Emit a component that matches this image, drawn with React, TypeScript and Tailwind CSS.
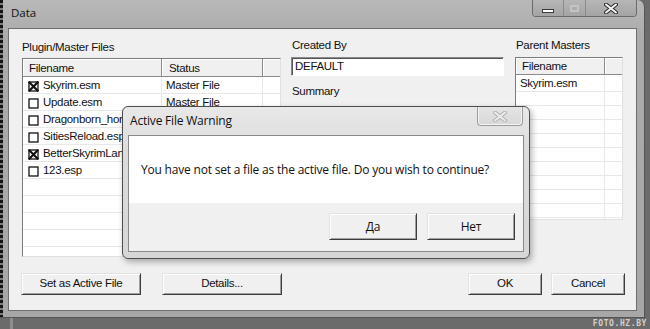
import React from "react";

type Row = { name: string; status: string; checked: boolean };

const rows: Row[] = [
  { name: "Skyrim.esm", status: "Master File", checked: true },
  { name: "Update.esm", status: "Master File", checked: false },
  { name: "Dragonborn_hor", status: "", checked: false },
  { name: "SitiesReload.esp", status: "", checked: false },
  { name: "BetterSkyrimLan", status: "", checked: true },
  { name: "123.esp", status: "", checked: false },
  { name: "", status: "", checked: false },
  { name: "", status: "", checked: false },
  { name: "", status: "", checked: false },
  { name: "", status: "", checked: false },
  { name: "", status: "", checked: false },
];

function Check({ checked }: { checked: boolean }) {
  return (
    <svg width="11" height="11" viewBox="0 0 11 11" className="shrink-0">
      <rect x="1" y="1" width="9" height="9" fill="white" stroke="#111" strokeWidth="1.3" />
      {checked && (
        <g stroke="#111" strokeWidth="2.2" strokeLinecap="square">
          <line x1="1.5" y1="1.5" x2="9.5" y2="9.5" />
          <line x1="9.5" y1="1.5" x2="1.5" y2="9.5" />
        </g>
      )}
    </svg>
  );
}

function ClassicButton({ children, className }: { children: React.ReactNode; className: string }) {
  return (
    <div
      className={`flex items-center justify-center bg-[#f0f0f0] border border-t-[#e2e2e2] border-l-[#e2e2e2] border-b-[#3c3c3c] border-r-[#3c3c3c] shadow-[inset_1px_1px_0_#ffffff,inset_-1px_-1px_0_#a0a0a0] ${className}`}
    >
      {children}
    </div>
  );
}

export default function App() {
  return (
    <div className="relative w-[650px] h-[329px] overflow-hidden bg-[#6b6b6b] font-['Liberation_Sans',Arial,sans-serif] text-[11.5px] tracking-[-0.3px] text-[#111]">
      {/* desktop bits under the window */}
      <div className="absolute left-[10px] top-[318px] w-[3px] h-[11px] bg-[#8e8e8e]" />
      <div className="absolute right-[3px] bottom-[1px] font-['DejaVu_Sans_Mono',monospace] font-bold text-[8px] leading-[8px] tracking-[0.6px] text-[#d0d0d0]">
        FOTO.HZ.BY
      </div>

      {/* main window */}
      <div className="absolute left-0 top-0 w-[645px] h-[318px] flex flex-col rounded-tr-[7px] border-r border-b border-[#555555] bg-[linear-gradient(180deg,#b8b8b8_0%,#ababab_12%,#a7a7a7_100%)] pl-[8px] pr-[7px] pb-[6px]">
        <div className="absolute left-0 top-0 w-[3px] h-full bg-[repeating-linear-gradient(180deg,#141414_0px,#141414_3px,#7c7c7c_3px,#7c7c7c_5px)]" />

        {/* title bar */}
        <div className="h-[28px] flex items-start">
          <div className="pt-[5px] pl-[3px] font-['Open_Sans',sans-serif] text-[11.5px] tracking-normal leading-[16px] text-[#111]">
            Data
          </div>
          <div className="ml-auto flex h-[17px] rounded-b-[4px] border border-t-0 border-[#6a6a6a] shadow-[inset_1px_0_0_#cfcfcf,inset_-1px_-1px_0_#cfcfcf] overflow-hidden">
            <div className="w-[31px] h-full flex items-center justify-center border-r border-[#8a8a8a] bg-[linear-gradient(180deg,#b6b6b6,#a4a4a4)]">
              <div className="mt-[5px] w-[12px] h-[4px] bg-white border border-[#3a3a3a]" />
            </div>
            <div className="w-[22px] h-full flex items-center justify-center border-r border-[#8a8a8a] bg-[linear-gradient(180deg,#b6b6b6,#a4a4a4)]">
              <div className="w-[9px] h-[7px] border-2 border-[#c4c4c4]" />
            </div>
            <div className="w-[50px] h-full flex items-center justify-center bg-[linear-gradient(180deg,#b6b6b6,#a4a4a4)]">
              <svg width="14" height="11" viewBox="0 0 14 11">
                <path d="M2 1.5 L12 9.5 M12 1.5 L2 9.5" stroke="#2e2e2e" strokeWidth="4" strokeLinecap="round" />
                <path d="M2 1.5 L12 9.5 M12 1.5 L2 9.5" stroke="#f4f4f4" strokeWidth="2" strokeLinecap="round" />
              </svg>
            </div>
          </div>
        </div>

        {/* client area */}
        <div className="flex-1 flex flex-col border border-[#6e6e6e] bg-[#f0f0f0]">
          <div className="flex pt-[10px] pl-[13px]">
            {/* plugin list column */}
            <div className="w-[259px] flex flex-col">
              <div className="mt-[2px] h-[13px] leading-[13px]">Plugin/Master Files</div>
              <div className="mt-[4px] h-[199px] flex flex-col overflow-hidden bg-white border border-t-[#7c7c7c] border-l-[#7c7c7c] border-r-[#e0e0e0] border-b-[#e0e0e0]">
                <div className="h-[18px] shrink-0 flex border-b border-[#8a8a8a] bg-[#f0f0f0]">
                  <div className="w-[139px] pl-[6px] pt-[2px] flex items-center border-r border-[#8a8a8a] shadow-[inset_1px_1px_0_#ffffff]">Filename</div>
                  <div className="w-[101px] pl-[7px] pt-[2px] flex items-center border-r border-[#8a8a8a] shadow-[inset_1px_1px_0_#ffffff]">Status</div>
                  <div className="flex-1 shadow-[inset_1px_1px_0_#ffffff]" />
                </div>
                {rows.map((r, i) => (
                  <div key={i} className="h-[17px] shrink-0 flex border-b border-[#e8e8e8]">
                    <div className="w-[139px] pl-[5px] pt-[2px] flex items-center gap-[4px] border-r border-[#e8e8e8] overflow-hidden whitespace-nowrap">
                      {r.name && <Check checked={r.checked} />}
                      <span>{r.name}</span>
                    </div>
                    <div className="w-[101px] pl-[4px] pt-[2px] flex items-center border-r border-[#e8e8e8] whitespace-nowrap overflow-hidden">
                      {r.status}
                    </div>
                    <div className="flex-1" />
                  </div>
                ))}
              </div>
            </div>

            {/* created by column */}
            <div className="ml-[10px] w-[213px] flex flex-col">
              <div className="h-[13px] leading-[13px] pl-[1px]">Created By</div>
              <div className="mt-[5px] h-[19px] flex items-center pl-[3px] pt-[1px] bg-white border border-t-[#8a8a8a] border-l-[#8a8a8a] border-b-white border-r-white shadow-[inset_1px_1px_0_#555555]">
                DEFAULT
              </div>
              <div className="mt-[9px] h-[13px] leading-[13px] pl-[1px]">Summary</div>
              <div className="mt-[12px] h-[140px] bg-white border border-t-[#8a8a8a] border-l-[#8a8a8a] border-b-white border-r-white shadow-[inset_1px_1px_0_#555555]" />
            </div>

            {/* parent masters column */}
            <div className="ml-[11px] w-[108px] flex flex-col">
              <div className="h-[13px] leading-[13px] pl-[1px]">Parent Masters</div>
              <div className="mt-[5px] h-[163px] flex flex-col overflow-hidden bg-white border border-t-[#7c7c7c] border-l-[#7c7c7c] border-r-[#e0e0e0] border-b-[#e0e0e0]">
                <div className="h-[17px] shrink-0 flex border-b border-[#8a8a8a] bg-[#f0f0f0]">
                  <div className="w-[89px] pl-[6px] pt-[2px] flex items-center border-r border-[#8a8a8a] shadow-[inset_1px_1px_0_#ffffff]">Filename</div>
                  <div className="flex-1 shadow-[inset_1px_1px_0_#ffffff]" />
                </div>
                <div className="h-[17px] shrink-0 flex border-b border-[#e8e8e8]">
                  <div className="w-[89px] pl-[4px] pt-[2px] flex items-center border-r border-[#e8e8e8]">Skyrim.esm</div>
                </div>
                {[0, 1, 2, 3, 4, 5, 6, 7, 8, 9].map((k) => (
                  <div key={k} className="h-[14px] shrink-0 flex border-b border-[#e8e8e8]">
                    <div className="w-[89px] border-r border-[#e8e8e8]" />
                  </div>
                ))}
              </div>
            </div>
          </div>

          {/* bottom buttons */}
          <div className="mt-auto mb-[15px] flex pl-[12px] pr-[11px]">
            <ClassicButton className="w-[120px] h-[22px]">Set as Active File</ClassicButton>
            <ClassicButton className="ml-[21px] w-[120px] h-[22px]">Details...</ClassicButton>
            <ClassicButton className="ml-auto w-[74px] h-[22px]">OK</ClassicButton>
            <ClassicButton className="ml-[9px] w-[74px] h-[22px]">Cancel</ClassicButton>
          </div>
        </div>
      </div>

      {/* Active File Warning dialog */}
      <div className="absolute left-[122px] top-[106px] w-[408px] h-[153px] flex flex-col rounded-[6px] border border-[#4d4d4d] bg-[linear-gradient(180deg,#e8e8e8_0%,#dcdcdc_30%,#d6d6d6_100%)] shadow-[2px_3px_6px_rgba(0,0,0,0.3)] px-[5px] pb-[6px] font-['Open_Sans',sans-serif] text-[12px] tracking-[-0.2px] text-[#111]">
        <div className="h-[28px] flex items-start pt-[6px] pl-[2px] leading-[16px]">Active File Warning</div>
        <div className="absolute right-[6px] top-0 w-[46px] h-[19px] flex items-center justify-center rounded-b-[4px] border border-t-0 border-[#9c9c9c] bg-[linear-gradient(180deg,#e4e4e4,#d8d8d8)] shadow-[inset_1px_0_0_#f4f4f4,inset_-1px_-1px_0_#f4f4f4]">
          <svg width="14" height="11" viewBox="0 0 14 11">
            <path d="M2 1.5 L12 9.5 M12 1.5 L2 9.5" stroke="#b4b4b4" strokeWidth="4" strokeLinecap="round" />
            <path d="M2 1.5 L12 9.5 M12 1.5 L2 9.5" stroke="#ececec" strokeWidth="2" strokeLinecap="round" />
          </svg>
        </div>
        <div className="flex-1 flex flex-col border border-[#8a8a8a]">
          <div className="h-[67px] flex items-center pl-[12px] bg-white">
            You have not set a file as the active file. Do you wish to continue?
          </div>
          <div className="flex-1 flex justify-end items-start gap-[10px] pt-[10px] pr-[8px] bg-[#f0f0f0]">
            <ClassicButton className="w-[88px] h-[27px]">Да</ClassicButton>
            <ClassicButton className="w-[88px] h-[27px]">Нет</ClassicButton>
          </div>
        </div>
      </div>
    </div>
  );
}
